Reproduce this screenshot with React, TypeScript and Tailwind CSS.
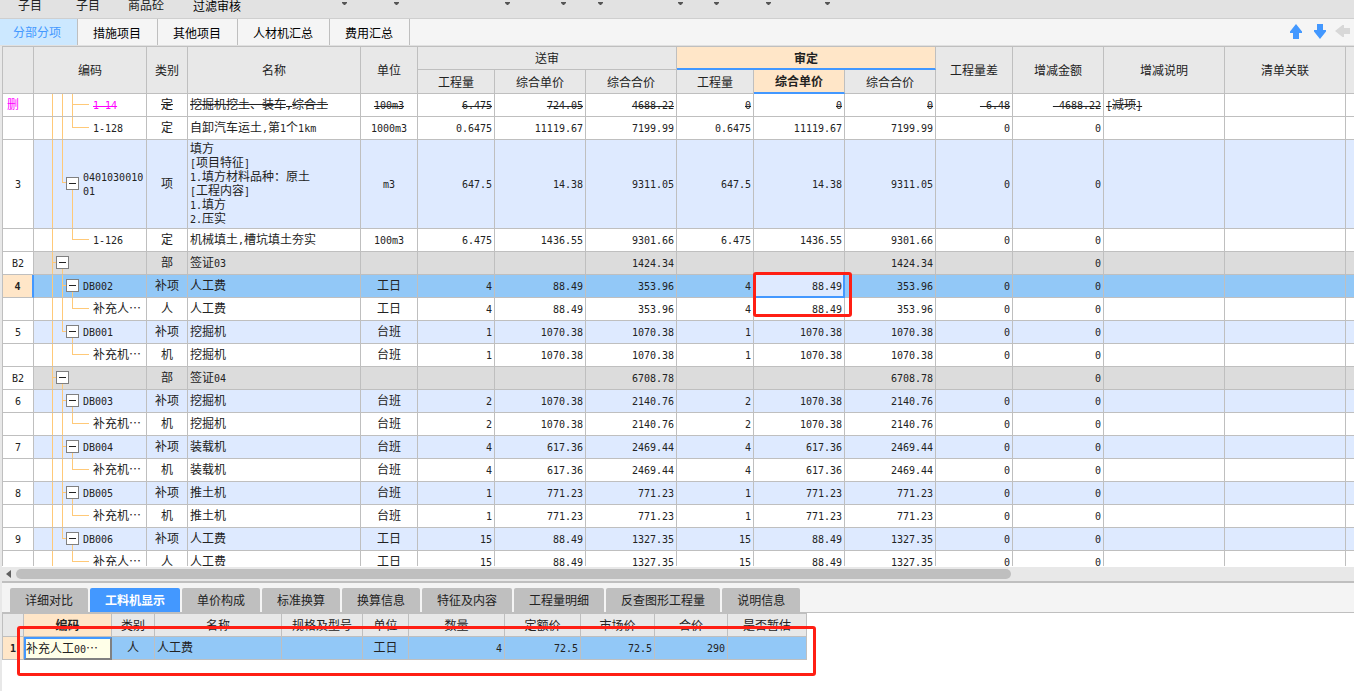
import { useState } from "react";
import clsx from "clsx";

type Kind = "item" | "child" | "section" | "deleted";

interface Row {
  no?: string;
  kind: Kind;
  code?: string;
  type: string;
  name: string;
  unit?: string;
  // submitted: quantity, unit price, total; then the approved three; then differences
  values: string[];
  note?: string;
  last?: boolean; // last item under its parent
  more?: boolean; // child followed by a sibling
  trunk?: boolean; // parent line runs on below
  selected?: boolean;
}

const same = (qty: string, price: string, total: string) => [qty, price, total, qty, price, total, "0", "0"];

const rows: Row[] = [
  { no: "删", kind: "deleted", code: "1-14", type: "定", name: "挖掘机挖土、装车,综合土", unit: "100m3", values: ["6.475", "724.05", "4688.22", "0", "0", "0", "-6.48", "-4688.22"], note: "[减项]", more: true, trunk: true },
  { kind: "child", code: "1-128", type: "定", name: "自卸汽车运土,第1个1km", unit: "1000m3", values: same("0.6475", "11119.67", "7199.99"), trunk: true },
  { no: "3", kind: "item", code: "040103001001", type: "项", name: "填方\n[项目特征]\n1.填方材料品种：原土\n[工程内容]\n1.填方\n2.压实", unit: "m3", values: same("647.5", "14.38", "9311.05"), last: true },
  { kind: "child", code: "1-126", type: "定", name: "机械填土,槽坑填土夯实", unit: "100m3", values: same("6.475", "1436.55", "9301.66") },
  { no: "B2", kind: "section", type: "部", name: "签证03", values: ["", "", "1424.34", "", "", "1424.34", "", "0"] },
  { no: "4", kind: "item", code: "DB002", type: "补项", name: "人工费", unit: "工日", values: same("4", "88.49", "353.96"), selected: true },
  { kind: "child", code: "补充人…", type: "人", name: "人工费", unit: "工日", values: same("4", "88.49", "353.96"), trunk: true },
  { no: "5", kind: "item", code: "DB001", type: "补项", name: "挖掘机", unit: "台班", values: same("1", "1070.38", "1070.38"), last: true },
  { kind: "child", code: "补充机…", type: "机", name: "挖掘机", unit: "台班", values: same("1", "1070.38", "1070.38") },
  { no: "B2", kind: "section", type: "部", name: "签证04", values: ["", "", "6708.78", "", "", "6708.78", "", "0"] },
  { no: "6", kind: "item", code: "DB003", type: "补项", name: "挖掘机", unit: "台班", values: same("2", "1070.38", "2140.76") },
  { kind: "child", code: "补充机…", type: "机", name: "挖掘机", unit: "台班", values: same("2", "1070.38", "2140.76"), trunk: true },
  { no: "7", kind: "item", code: "DB004", type: "补项", name: "装载机", unit: "台班", values: same("4", "617.36", "2469.44") },
  { kind: "child", code: "补充机…", type: "机", name: "装载机", unit: "台班", values: same("4", "617.36", "2469.44"), trunk: true },
  { no: "8", kind: "item", code: "DB005", type: "补项", name: "推土机", unit: "台班", values: same("1", "771.23", "771.23") },
  { kind: "child", code: "补充机…", type: "机", name: "推土机", unit: "台班", values: same("1", "771.23", "771.23"), trunk: true },
  { no: "9", kind: "item", code: "DB006", type: "补项", name: "人工费", unit: "工日", values: same("15", "88.49", "1327.35"), last: true },
  { kind: "child", code: "补充人…", type: "人", name: "人工费", unit: "工日", values: same("15", "88.49", "1327.35") },
];

const toolbar = [
  { label: "子目", className: "w-[60px] leading-[10px]" },
  { label: "子目", className: "w-14 leading-[10px]" },
  { label: "商品砼", className: "w-[60px] leading-[10px]" },
  { label: "过滤审核", className: "w-[82px] leading-[12px] text-black" },
];

const dropdowns = ["w-[89px]", "w-[52px]", "w-[111px]", "w-14", "w-[37px]", "w-20", "w-9", "w-[52px]", "w-[59px]"];

const views = ["分部分项", "措施项目", "其他项目", "人材机汇总", "费用汇总"];

const detailTabs = ["详细对比", "工料机显示", "单价构成", "标准换算", "换算信息", "特征及内容", "工程量明细", "反查图形工程量", "说明信息"];

const detailHeads = ["类别", "名称", "规格及型号", "单位", "数量", "定额价", "市场价", "合价", "是否暂估"];

const th = "border-r border-b border-[#bfbfbf] bg-[#e8e8e8] p-0 font-normal";
const td = "h-[23px] border-r border-b border-[#bfbfbf] px-[2px] pt-0 pb-[2px]";

// Latin runs use a half-width monospace face so they line up with the full-width characters
function Mixed({ text, strike }: { text: string; strike?: boolean }) {
  return (
    <>
      {text.split(/([\x21-\x7e]+)/).map((part, i) =>
        part === "" ? null : (
          <span
            key={i}
            className={clsx(i % 2 === 1 && "font-['DejaVu_Sans_Mono',monospace] text-[10px] leading-[10px]", strike && "line-through")}
          >
            {part}
          </span>
        )
      )}
    </>
  );
}

function TreeLines({ row }: { row: Row }) {
  const child = row.kind === "child" || row.kind === "deleted";
  const item = row.kind === "item";
  const section = row.kind === "section";
  return (
    <svg className="pointer-events-none absolute top-0 left-0 h-full w-full" stroke="#ffc978" shapeRendering="crispEdges" aria-hidden="true">
      <line x1="18.5" x2="18.5" y1="0" y2="100%" />
      {section && <line x1="18" x2="22" y1="48%" y2="48%" />}
      {section && <line x1="28.5" x2="28.5" y1="48%" y2="100%" />}
      {item && <line x1="28.5" x2="28.5" y1="0" y2={row.last ? "48%" : "100%"} />}
      {item && <line x1="28" x2="32" y1="48%" y2="48%" />}
      {item && <line x1="38.5" x2="38.5" y1="48%" y2="100%" />}
      {child && row.trunk && <line x1="28.5" x2="28.5" y1="0" y2="100%" />}
      {child && <line x1="38.5" x2="38.5" y1="0" y2={row.more ? "100%" : "48%"} />}
      {child && <line x1="38" x2="55" y1="48%" y2="48%" />}
    </svg>
  );
}

function CodeCell({ row }: { row: Row }) {
  const hasBox = row.kind === "item" || row.kind === "section";
  return (
    <div className={clsx("flex items-center", row.kind === "section" ? "pl-[22px]" : row.kind === "item" ? "pl-8" : "pl-[59px]")}>
      {hasBox && (
        <button aria-label="折叠" className="relative mr-1 flex size-[13px] shrink-0 items-center justify-center border border-[#808080] bg-white">
          <span className="h-px w-[7px] bg-[#222]" />
        </button>
      )}
      <span className={clsx("min-w-0", row.code && row.code.length > 10 ? "break-all" : "whitespace-nowrap", row.kind === "deleted" && "text-[#f0f]")}>
        {row.code && <Mixed text={row.code} strike={row.kind === "deleted"} />}
      </span>
    </div>
  );
}

function GridRow({ row }: { row: Row }) {
  const deleted = row.kind === "deleted";
  return (
    <tr className={row.selected ? "bg-[#92c8f7]" : row.kind === "item" ? "bg-[#deeaff]" : row.kind === "section" ? "bg-[#dcdcdc]" : "bg-white"}>
      <td
        className={clsx(
          td,
          "text-center",
          row.selected ? "border-r-2! border-r-[#4398ff]! bg-[#ffe6c8] font-bold" : "bg-white",
          deleted && "pr-3! text-[#f0f]"
        )}
      >
        {row.no && <Mixed text={row.no} />}
      </td>
      <td className={clsx(td, "relative pl-0! pr-0!")}>
        <TreeLines row={row} />
        <CodeCell row={row} />
      </td>
      <td className={clsx(td, "text-center")}>
        <Mixed text={row.type} strike={deleted} />
      </td>
      <td className={clsx(td, "whitespace-pre-line", row.name.includes("\n") && "h-[89px]!")}>
        <Mixed text={row.name} strike={deleted} />
      </td>
      <td className={clsx(td, "text-center")}>{row.unit && <Mixed text={row.unit} strike={deleted} />}</td>
      {row.values.map((value, i) => {
        const active = row.selected && i === 4;
        return (
          <td key={i} className={clsx(td, "text-right", active && "relative border-r-2! border-b-2! border-[#4398ff]! bg-[#deeaff] pr-px! pb-px!")}>
            <Mixed text={value} strike={deleted} />
            {active && <div className="pointer-events-none absolute -top-[3px] -left-px z-10 h-[45px] w-[99px] rounded-[3px] border-3 border-[#ff1f14]" />}
          </td>
        );
      })}
      <td className={td}>{row.note && <Mixed text={row.note} strike={deleted} />}</td>
      <td className={td} />
      <td className={clsx(td, "border-r-0!")} />
    </tr>
  );
}

function EstimateGrid() {
  return (
    <table className="w-full table-fixed border-separate border-spacing-0 border-t border-l border-[#bfbfbf]">
      <colgroup>
        <col className="w-[31px]" />
        <col className="w-[113px]" />
        <col className="w-[41px]" />
        <col className="w-[173px]" />
        <col className="w-[57px]" />
        <col className="w-[77px]" />
        <col className="w-[91px]" />
        <col className="w-[91px]" />
        <col className="w-[77px]" />
        <col className="w-[91px]" />
        <col className="w-[91px]" />
        <col className="w-[77px]" />
        <col className="w-[91px]" />
        <col className="w-[121px]" />
        <col className="w-[121px]" />
        <col />
      </colgroup>
      <thead>
        <tr>
          <th rowSpan={2} className={th} />
          {["编码", "类别", "名称", "单位"].map((label) => (
            <th key={label} rowSpan={2} className={th}>{label}</th>
          ))}
          <th colSpan={3} className={clsx(th, "h-[23px]")}>送审</th>
          <th colSpan={3} className={clsx(th, "h-[23px] border-b-2! border-b-[#4398ff]! bg-[#ffe6c8]! font-bold!")}>审定</th>
          {["工程量差", "增减金额", "增减说明", "清单关联"].map((label) => (
            <th key={label} rowSpan={2} className={th}>{label}</th>
          ))}
          <th rowSpan={2} className={clsx(th, "border-r-0!")} />
        </tr>
        <tr>
          <th className={clsx(th, "h-6")}>工程量</th>
          <th className={th}>综合单价</th>
          <th className={th}>综合合价</th>
          <th className={th}>工程量</th>
          <th className={clsx(th, "border-b-2! border-b-[#4398ff]! bg-[#ffe6c8]! font-bold!")}>综合单价</th>
          <th className={th}>综合合价</th>
        </tr>
      </thead>
      <tbody>
        {rows.map((row, i) => (
          <GridRow key={i} row={row} />
        ))}
      </tbody>
    </table>
  );
}

function DetailGrid() {
  const cell = clsx(td, "bg-[#92c8f7]");
  return (
    <div className="relative w-max">
      <table className="table-fixed border-separate border-spacing-0 border-t border-l border-[#bfbfbf]">
        <colgroup>
          <col className="w-[21px]" />
          <col className="w-[88px]" />
          <col className="w-[43px]" />
          <col className="w-[127px]" />
          <col className="w-[81px]" />
          <col className="w-[46px]" />
          <col className="w-24" />
          <col className="w-[76px]" />
          <col className="w-[74px]" />
          <col className="w-[73px]" />
          <col className="w-[79px]" />
        </colgroup>
        <thead>
          <tr>
            <th className={clsx(th, "h-[23px] w-[21px]")} />
            <th className={clsx(th, "bg-[#ffe6c8]! font-bold!")}>编码</th>
            {detailHeads.map((label) => (
              <th key={label} className={th}>{label}</th>
            ))}
          </tr>
        </thead>
        <tbody>
          <tr>
            <td className={clsx(td, "bg-[#ffe6c8] text-center font-bold")}>
              <Mixed text="1" />
            </td>
            <td className="h-[23px] border-2 border-t-[#4398ff] border-r-[#808080] border-b-[#808080] border-l-[#4398ff] bg-[#ffffe8] px-0 pt-0 pb-[2px] whitespace-nowrap">
              <Mixed text="补充人工00…" />
            </td>
            <td className={clsx(cell, "text-center")}>人</td>
            <td className={cell}>人工费</td>
            <td className={cell} />
            <td className={clsx(cell, "text-center")}>工日</td>
            {["4", "72.5", "72.5", "290"].map((value, i) => (
              <td key={i} className={clsx(cell, "text-right")}>
                <Mixed text={value} />
              </td>
            ))}
            <td className={cell} />
          </tr>
        </tbody>
      </table>
      <div className="pointer-events-none absolute top-[13px] -right-[9px] left-[15px] h-[50px] rounded-[3px] border-3 border-[#ff1f14]" />
    </div>
  );
}

export default function App() {
  const [view, setView] = useState(0);
  const [detail, setDetail] = useState(1);

  return (
    <div className="flex h-screen flex-col overflow-hidden bg-white font-['Noto_Sans_CJK_SC',sans-serif] text-xs leading-[14px] text-[#222]">
      {/* Toolbar */}
      <div className="flex h-[19px] shrink-0 items-start overflow-hidden border-b border-[#cfcfcf] bg-[#e2e2e2]">
        {toolbar.map((tool, i) => (
          <button key={i} className={clsx("shrink-0 text-center", tool.className)}>{tool.label}</button>
        ))}
        {dropdowns.map((width, i) => (
          <button key={i} aria-label="展开" className={clsx("flex shrink-0 justify-end pt-[2px]", width)}>
            <svg width="5" height="3" viewBox="0 0 5 3" fill="#555">
              <path d="M0 0h5v1L3 3H2L0 1z" />
            </svg>
          </button>
        ))}
      </div>

      {/* View tabs */}
      <div className="flex h-[27px] shrink-0 items-stretch border-b border-[#e0e0e0] bg-[#f5f5f5]">
        {views.map((label, i) => (
          <button
            key={label}
            onClick={() => setView(i)}
            className={clsx(
              "border-r border-[#bfbfbf]",
              i === 0 ? "pr-4 pl-[13px]" : "pr-4 pl-[15px]",
              view === i ? "bg-[#cce8ff] text-[#4398ff]" : "pt-px text-black"
            )}
          >
            {label}
          </button>
        ))}
        <div className="ml-auto flex items-center pr-1 pb-[2px]">
          <button aria-label="上移" className="mr-3">
            <svg width="12" height="15" viewBox="0 0 12 15" fill="#4398ff">
              <path d="M6 0L12 7.5V9H9V15H3V9H0V7.5z" />
            </svg>
          </button>
          <button aria-label="下移" className="mr-[9px]">
            <svg width="12" height="15" viewBox="0 0 12 15" fill="#4398ff">
              <path d="M6 15L12 7.5V6H9V0H3V6H0V7.5z" />
            </svg>
          </button>
          <button aria-label="后退">
            <svg width="15" height="12" viewBox="0 0 15 12" fill="#d8d8d8">
              <path d="M0 6L7.5 0H9V3H15V9H9V12H7.5z" />
            </svg>
          </button>
        </div>
      </div>

      <div className="flex min-h-0 flex-1 flex-col border-l-2 border-[#e8e8e8]">
        <div className="mb-px min-h-0 flex-1 overflow-hidden">
          <EstimateGrid />
        </div>

        {/* Horizontal scrollbar */}
        <div className="flex h-4 shrink-0 items-center border-b-2 border-[#bfbfbf] bg-[#e8e8e8]">
          <svg className="mr-[5px] ml-1" width="5" height="8" viewBox="0 0 5 8" fill="#606060">
            <path d="M5 0v8L0 4z" />
          </svg>
          <div className="h-[10px] flex-[995] rounded-full bg-[#bfbfbf]" />
          <div className="flex-[343]" />
        </div>

        {/* Detail pane */}
        <div className="shrink-0 pb-[31px]">
          <div className="flex gap-[2px] border-b border-[#bfbfbf] bg-[#f4f4f4] pt-[5px] pl-2">
            {detailTabs.map((label, i) => (
              <button
                key={label}
                onClick={() => setDetail(i)}
                className={clsx(
                  "h-6 rounded-t-[2px] px-[15px] whitespace-nowrap",
                  detail === i ? "bg-[#4398ff] font-bold text-white" : "bg-[#bfbfbf]"
                )}
              >
                {label}
              </button>
            ))}
          </div>
          <DetailGrid />
        </div>
      </div>
    </div>
  );
}
